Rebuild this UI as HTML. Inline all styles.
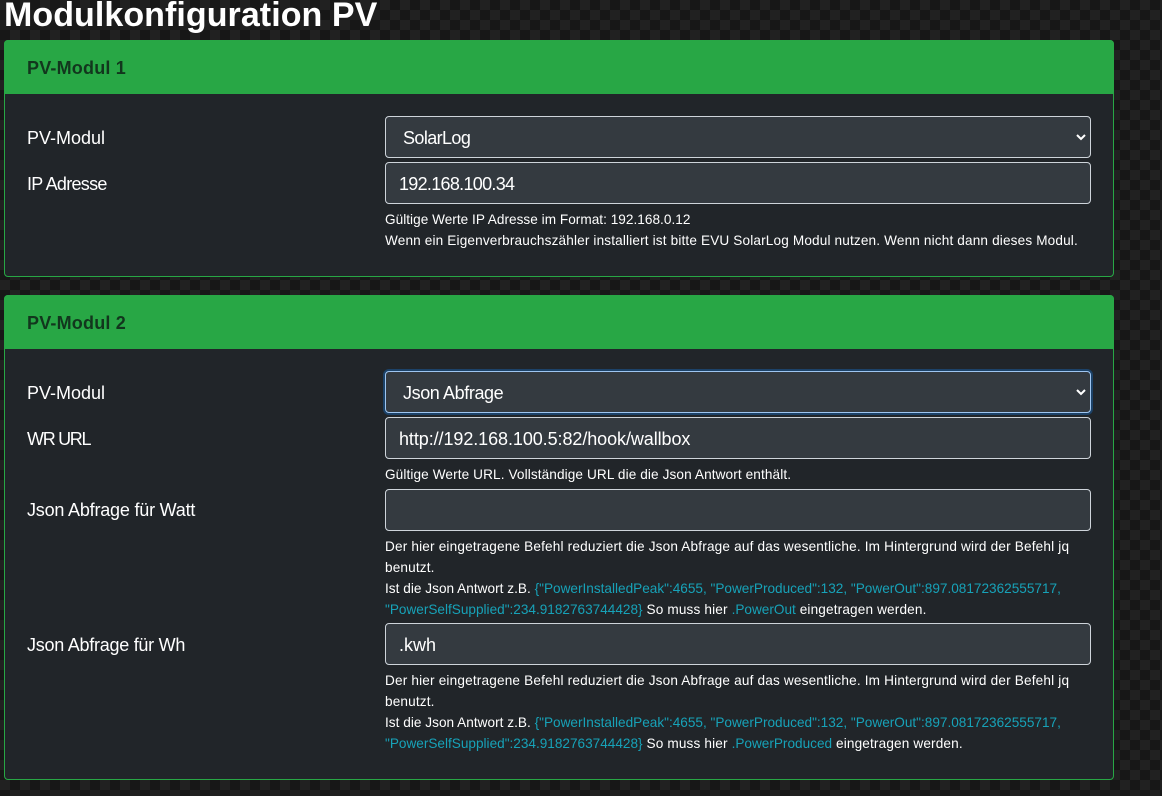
<!DOCTYPE html>
<html lang="de"><head><meta charset="utf-8"><title>Modulkonfiguration PV</title>
<style>
*{box-sizing:border-box}
html,body{margin:0;padding:0}
body{width:1162px;height:796px;overflow:hidden;position:relative;color:#fff;
font-family:"Liberation Sans",Arial,sans-serif;background-color:#1b1b1b;
background-image:repeating-conic-gradient(#171717 0 25%,#212121 0 50%);
background-size:20px 20px;background-position:0 0}
.t{position:absolute;white-space:nowrap}
h1{position:absolute;margin:0;left:4px;top:-6px;font-size:34px;line-height:42px;font-weight:700;white-space:nowrap;letter-spacing:.06px}
.card{position:absolute;left:4px;width:1110px;background:#212529;border:1px solid #28a745;border-radius:4px}
.hd{position:absolute;left:-1px;top:-1px;width:1110px;height:54px;background:#28a745;border-radius:4px 4px 0 0;color:#12361d;font-weight:700;font-size:18px;line-height:56px;padding-left:23px;letter-spacing:.2px}
.l{position:absolute;left:27px;font-size:18px;line-height:24px;white-space:nowrap}
.f{position:absolute;left:385px;width:706px;height:42px;background:#343a40;border:1px solid #ced4da;border-radius:4px;font-size:18px;line-height:42px;padding-left:13px;white-space:nowrap;color:#fff}
.s{padding-left:17px}
.s svg{position:absolute;right:3px;top:14px}
.foc{border-color:#9ec5f0;box-shadow:0 0 0 2px #1c4268}
.h{position:absolute;left:385px;font-size:13.6px;line-height:21px;white-space:nowrap;color:#fff;letter-spacing:.15px}
.c{color:#17a2b8;letter-spacing:0}
</style></head><body>
<h1>Modulkonfiguration PV</h1>

<div class="card" style="top:40px;height:237px"><div class="hd">PV-Modul 1</div></div>
<div class="t l" style="top:126px">PV-Modul</div>
<div class="f s" style="top:116px;"><span style="letter-spacing:-.6px">SolarLog</span><svg width="12" height="12" viewBox="0 0 12 12"><path d="M2 4l4 4 4-4" fill="none" stroke="#fff" stroke-width="2"/></svg></div>
<div class="t l" style="top:172px;letter-spacing:-.7px">IP Adresse</div>
<div class="f" style="top:162px;letter-spacing:-.7px">192.168.100.34</div>
<div class="h" style="top:209px;letter-spacing:.03px">Gültige Werte IP Adresse im Format: 192.168.0.12</div>
<div class="h" style="top:230px">Wenn ein Eigenverbrauchszähler installiert ist bitte EVU SolarLog Modul nutzen. Wenn nicht dann dieses Modul.</div>

<div class="card" style="top:295px;height:485px"><div class="hd">PV-Modul 2</div></div>
<div class="t l" style="top:381px">PV-Modul</div>
<div class="f s foc" style="top:371px"><span style="letter-spacing:-.4px">Json Abfrage</span><svg width="12" height="12" viewBox="0 0 12 12"><path d="M2 4l4 4 4-4" fill="none" stroke="#fff" stroke-width="2"/></svg></div>
<div class="t l" style="top:427px;letter-spacing:-1.3px">WR URL</div>
<div class="f" style="top:417px;letter-spacing:-.08px">http://192.168.100.5:82/hook/wallbox</div>
<div class="h" style="top:464px;letter-spacing:.11px">Gültige Werte URL. Vollständige URL die die Json Antwort enthält.</div>
<div class="t l" style="top:498px;letter-spacing:-.2px">Json Abfrage für Watt</div>
<div class="f" style="top:489px"></div>
<div class="h" style="top:536px;letter-spacing:.175px">Der hier eingetragene Befehl reduziert die Json Abfrage auf das wesentliche. Im Hintergrund wird der Befehl jq</div>
<div class="h" style="top:557px">benutzt.</div>
<div class="h" style="top:578px;letter-spacing:.03px">Ist die Json Antwort z.B. <span class="c">{"PowerInstalledPeak":4655, "PowerProduced":132, "PowerOut":897.08172362555717,</span></div>
<div class="h" style="top:599px"><span class="c">"PowerSelfSupplied":234.9182763744428}</span> So muss hier <span class="c">.PowerOut</span> eingetragen werden.</div>
<div class="t l" style="top:633px;letter-spacing:-.26px">Json Abfrage für Wh</div>
<div class="f" style="top:623px">.kwh</div>
<div class="h" style="top:670px;letter-spacing:.175px">Der hier eingetragene Befehl reduziert die Json Abfrage auf das wesentliche. Im Hintergrund wird der Befehl jq</div>
<div class="h" style="top:691px">benutzt.</div>
<div class="h" style="top:712px;letter-spacing:.03px">Ist die Json Antwort z.B. <span class="c">{"PowerInstalledPeak":4655, "PowerProduced":132, "PowerOut":897.08172362555717,</span></div>
<div class="h" style="top:733px"><span class="c">"PowerSelfSupplied":234.9182763744428}</span> So muss hier <span class="c">.PowerProduced</span> eingetragen werden.</div>
</body></html>
